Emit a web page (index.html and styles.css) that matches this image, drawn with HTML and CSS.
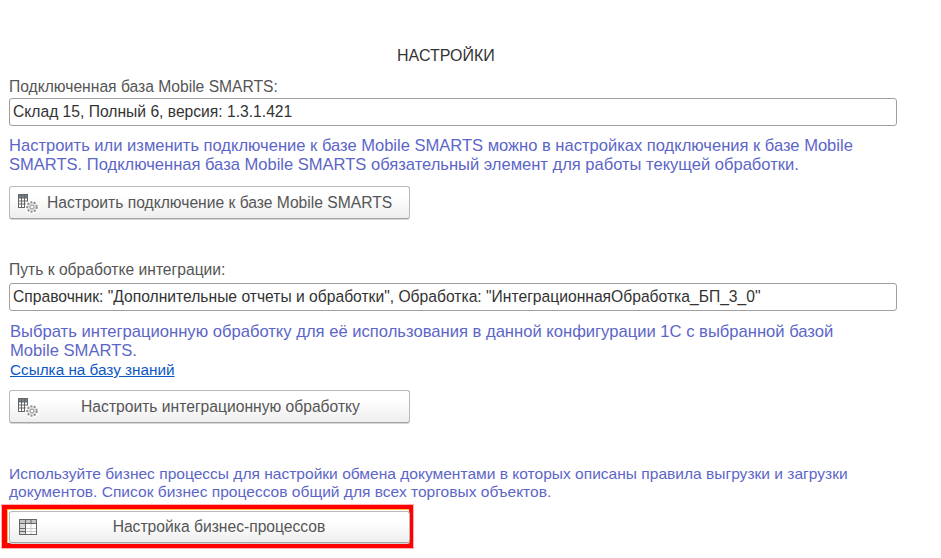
FILE: index.html
```html
<!DOCTYPE html>
<html lang="ru">
<head>
<meta charset="utf-8">
<title>Настройки</title>
<link rel="stylesheet" href="styles.css">
</head>
<body>
<svg class="defs" width="0" height="0">
  <defs>
    <g id="grid-gear">
      <rect x="1.500" y="2.500" width="9" height="13" fill="#fff" stroke="#666"/>
      <rect x="1.500" y="2.500" width="9" height="3.500" fill="#71808e" stroke="#666"/>
      <path d="M4.500 3v12M7.500 3v12M2 9h8M2 12h8" stroke="#666" fill="none"/>
      <circle cx="15" cy="15" r="7" fill="#fff"/>
      <circle cx="15" cy="15" r="4.800" fill="#e4e4e4" stroke="#909090" stroke-width="2" stroke-dasharray="2 1.400"/>
      <circle cx="15" cy="15" r="2" fill="#fff" stroke="#909090"/>
    </g>
  </defs>
</svg>
<main class="page">
  <h1 class="title">НАСТРОЙКИ</h1>
  <section class="group-a">
    <div class="label">Подключенная база Mobile SMARTS:</div>
    <div class="field">Склад 15, Полный 6, версия: 1.3.1.421</div>
    <p class="hint hint-a">Настроить или изменить подключение к базе Mobile SMARTS можно в настройках подключения к базе Mobile SMARTS. Подключенная база Mobile SMARTS обязательный элемент для работы текущей обработки.</p>
    <button class="btn btn-a" type="button">
      <svg class="ico" width="22" height="22" viewBox="0 0 22 22"><use href="#grid-gear"/></svg>
      <span class="btn-text">Настроить подключение к базе Mobile SMARTS</span>
    </button>
  </section>
  <section class="group-b">
    <div class="label">Путь к обработке интеграции:</div>
    <div class="field">Справочник: "Дополнительные отчеты и обработки", Обработка: "ИнтеграционнаяОбработка_БП_3_0"</div>
    <p class="hint hint-b">Выбрать интеграционную обработку для её использования в данной конфигурации 1С с выбранной базой Mobile SMARTS.</p>
    <a class="link" href="#">Ссылка на базу знаний</a>
    <button class="btn btn-b" type="button">
      <svg class="ico" width="22" height="22" viewBox="0 0 22 22"><use href="#grid-gear"/></svg>
      <span class="btn-text center">Настроить интеграционную обработку</span>
    </button>
  </section>
  <section class="group-c">
    <p class="hint hint-c">Используйте бизнес процессы для настройки обмена документами в которых описаны правила выгрузки и загрузки документов. Список бизнес процессов общий для всех торговых объектов.</p>
    <div class="mark">
      <button class="btn btn-c" type="button">
        <svg class="ico" width="20" height="18" viewBox="0 0 20 18">
          <rect x="1.500" y="1.500" width="17" height="15" fill="#fff" stroke="#666"/>
          <rect x="1.500" y="1.500" width="17" height="4" fill="#c4c4c4" stroke="#666"/>
          <rect x="1.500" y="5.500" width="6" height="11" fill="#d8d8d8" stroke="#666"/>
          <path d="M7.500 2v14M13 2v4M2 10.500h5M2 13.500h5" stroke="#666" fill="none"/>
          <path d="M13 6v10M8 10.500h10M8 13.500h10" stroke="#ccc" fill="none"/>
        </svg>
        <span class="btn-text center">Настройка бизнес-процессов</span>
      </button>
    </div>
  </section>
</main>
</body>
</html>
```
FILE: styles.css
```css
* { box-sizing: border-box; }
html, body { margin: 0; padding: 0; background: #fff; }
body { width: 941px; height: 558px; overflow: hidden; font-family: "Liberation Sans", Arial, sans-serif; color: #555; font-size: 15.65px; }
.defs { position: absolute; }
.page { padding: 46px 44px 0 9px; }
.title { margin: 0 0 0 388px; font-size: 16px; line-height: 20px; font-weight: 400; color: #333; }
.group-a { margin-top: 12px; }
.label { line-height: 18px; color: #555; }
.field { margin-top: 2px; width: 888px; height: 28px; border: 1px solid #a0a0a0; border-radius: 3px; padding: 0 3px; line-height: 26px; color: #333; white-space: nowrap; overflow: hidden; }
.group-b .field { margin-top: 4px; }
.hint { margin: 0; line-height: 19px; color: #5c66c8; }
.hint-a { margin-top: 10px; width: 880px; font-size: 16.55px; }
.btn { display: flex; align-items: center; width: 401px; height: 33px; padding: 0 0 0 7px; border: 1px solid #b8b8b8; border-bottom-color: #a4a4a4; border-radius: 3px; background: linear-gradient(#fff 30%, #eee); font: inherit; color: #555; text-align: left; box-shadow: 0 1px 0 #d4d4d4; }
.btn-a { margin-top: 12px; }
.ico { flex: none; }
.btn-text { margin-left: 8px; white-space: nowrap; }
.center { flex: 1; margin-left: 0; text-align: center; padding-right: 7px; }
.group-b { margin-top: 42px; }
.hint-b { margin: 11px 0 0 1px; width: 860px; font-size: 16.6px; }
.link { display: block; margin: 0 0 0 1px; font-size: 15.3px; line-height: 19px; color: #0b57c4; text-decoration: underline; }
.btn-b { margin-top: 11px; }
.group-c { margin-top: 42px; }
.hint-c { width: 880px; line-height: 18px; font-size: 15.55px; }
.mark { margin: 4px 0 0 -7px; width: 411px; height: 43px; border: 5px solid #f00; border-right-width: 4px; border-top-width: 4px; padding: 2px 0 0 2px; box-shadow: 0 0 0 1px rgba(255, 0, 0, 0.3), inset 1px 1px 0 #ffc040; }
.btn-c { width: 401px; height: 32px; padding-left: 8px; }
.btn-c .center { padding-right: 9px; }
```
